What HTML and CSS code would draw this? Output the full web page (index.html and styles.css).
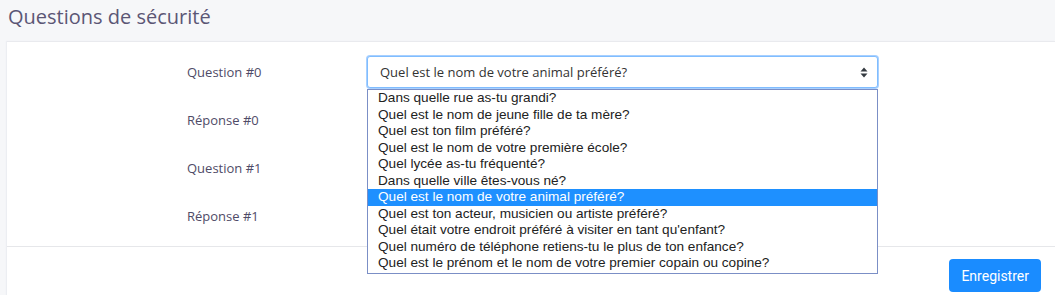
FILE: index.html
```html
<!DOCTYPE html>
<html>
<head>
    <title>Questions de sécurité</title>
    <link rel="stylesheet" href="styles.css">
</head>
<body>
    <h1 class="page-title">Questions de sécurité</h1>

    <div class="card">
        <div class="card-body">
            <div class="form-group">
                <label>Question #0</label>
                <div class="select-wrap">
                    <div class="select focused">
                        <span>Quel est le nom de votre animal préféré?</span>
                        <svg class="arrows" width="8" height="11" viewBox="0 0 8 11">
                            <path d="M4 0.5 L7.5 4.5 H0.5 Z M4 10.5 L7.5 6.5 H0.5 Z" fill="#343a40"/>
                        </svg>
                    </div>
                    <!-- open option list of the first select -->
                    <ul class="options">
                        <li>Dans quelle rue as-tu grandi?</li>
                        <li>Quel est le nom de jeune fille de ta mère?</li>
                        <li>Quel est ton film préféré?</li>
                        <li>Quel est le nom de votre première école?</li>
                        <li>Quel lycée as-tu fréquenté?</li>
                        <li>Dans quelle ville êtes-vous né?</li>
                        <li class="selected">Quel est le nom de votre animal préféré?</li>
                        <li>Quel est ton acteur, musicien ou artiste préféré?</li>
                        <li>Quel était votre endroit préféré à visiter en tant qu'enfant?</li>
                        <li>Quel numéro de téléphone retiens-tu le plus de ton enfance?</li>
                        <li>Quel est le prénom et le nom de votre premier copain ou copine?</li>
                    </ul>
                </div>
            </div>
            <div class="form-group">
                <label>Réponse #0</label>
                <input type="text" class="input">
            </div>
            <div class="form-group">
                <label>Question #1</label>
                <div class="select"><span></span></div>
            </div>
            <div class="form-group">
                <label>Réponse #1</label>
                <input type="text" class="input">
            </div>
        </div>
        <div class="card-footer">
            <button class="btn-primary">Enregistrer</button>
        </div>
    </div>
</body>
</html>
```

FILE: styles.css
```css
body {
    font-family: "Open Sans", "Noto Sans", sans-serif;
    margin: 0;
    padding: 0;
    background-color: #f6f7f9;
    color: #4f4b67;
}
.page-title {
    font-size: 20px;
    font-weight: 400;
    color: #5b5675;
    margin: 0;
    padding: 2px 8px 0 8px;
    height: 39px;
    line-height: 30px;
}
.card {
    margin-left: 7px;
    background-color: #fff;
    border-top: 1px solid #e9eaee;
    overflow: hidden;
    height: 260px;
    box-shadow: -1px 0 1px #eceef2;
}
.card-body {
    padding: 14px 0 14px 0;
    display: flex;
    flex-direction: column;
    gap: 16px;
}
.form-group {
    display: grid;
    grid-template-columns: 360px 511px;
    align-items: center;
    height: 32px;
}
.form-group label {
    padding-left: 180px;
    font-size: 13px;
}
.select-wrap {
    position: relative;
}
.select, .input {
    box-sizing: border-box;
    width: 511px;
    height: 32px;
    border: 1px solid #ced4da;
    border-radius: 3px;
    background: #fff;
    margin: 0;
}
.select {
    display: flex;
    align-items: center;
    justify-content: space-between;
    padding: 0 9px 0 12px;
    font-size: 13px;
    color: #333;
}
.select.focused {
    border-color: #80bdff;
    box-shadow: 0 0 0 1px #a8d0ff;
}
.options {
    position: absolute;
    top: 33px;
    left: 0;
    width: 511px;
    box-sizing: border-box;
    margin: 0;
    padding: 0 0 1px 0;
    list-style: none;
    background: #fff;
    border: 1px solid #7b8fc6;
    font-family: "Liberation Sans", Arial, sans-serif;
    font-size: 13.6px;
    color: #222;
    z-index: 2;
}
.options li {
    height: 16.5px;
    line-height: 16.5px;
    padding-left: 10px;
    white-space: nowrap;
}
.options li.selected {
    background-color: #1e90ff;
    color: #fff;
}
.card-footer {
    border-top: 1px solid #e6e7ea;
    display: flex;
    justify-content: flex-end;
    padding: 12px 14px;
}
.btn-primary {
    font-family: Roboto, sans-serif;
    font-size: 14px;
    color: #fff;
    background-color: #1a8cff;
    border: none;
    border-radius: 4px;
    height: 33px;
    padding: 0 12px;
}
```
